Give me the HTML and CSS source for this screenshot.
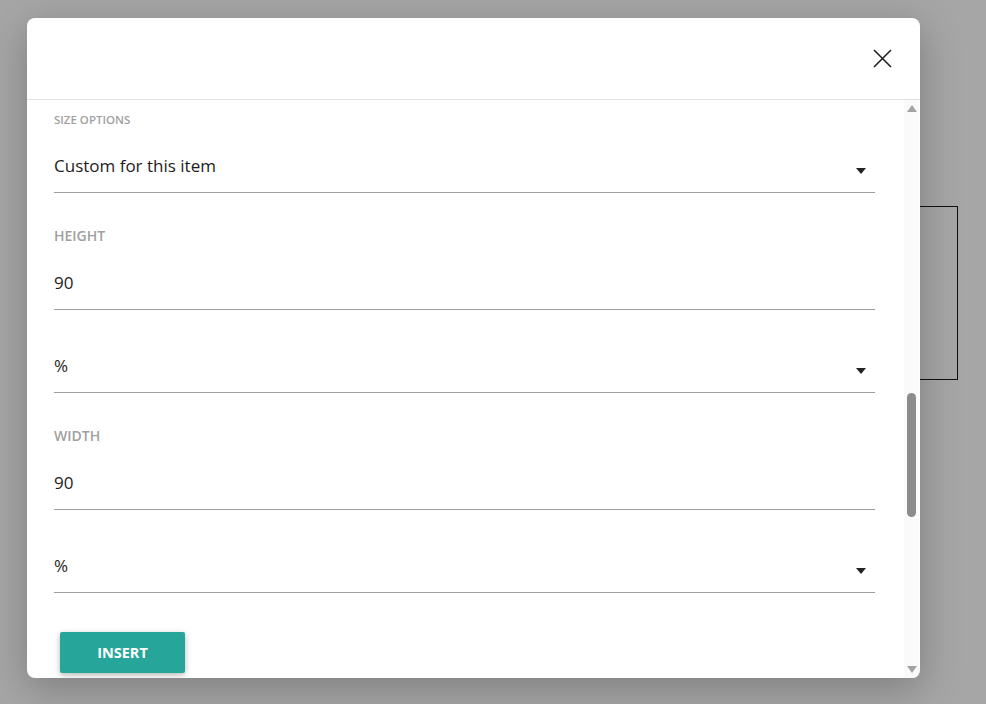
FILE: index.html
```html
<!DOCTYPE html>
<html lang="en">
<head>
    <meta charset="UTF-8">
    <meta name="viewport" content="width=device-width, initial-scale=1.0">
    <title>Insert item</title>
    <link rel="stylesheet" href="styles.css">
</head>
<body>

<div class="page">
    <div class="frame"></div>
</div>

<div class="modal">
    <div class="modal-header">
        <button class="close-button" title="Close">
            <svg width="19" height="19" viewBox="0 0 19 19">
                <path d="M1 1 L18 18 M18 1 L1 18" stroke="#1f1f1f" stroke-width="1.6" fill="none"/>
            </svg>
        </button>
    </div>

    <div class="modal-body">
        <div class="form">
            <div class="field">
                <label class="label label-small">Size options</label>
                <div class="select">
                    <span>Custom for this item</span>
                    <span class="caret"></span>
                </div>
            </div>

            <div class="field field-labeled">
                <label class="label">Height</label>
                <div class="input">90</div>
            </div>

            <div class="field field-plain">
                <div class="select">
                    <span>%</span>
                    <span class="caret"></span>
                </div>
            </div>

            <div class="field field-labeled">
                <label class="label">Width</label>
                <div class="input">90</div>
            </div>

            <div class="field field-plain">
                <div class="select">
                    <span>%</span>
                    <span class="caret"></span>
                </div>
            </div>

            <button class="insert-button">Insert</button>
        </div>

        <!-- scrollbar of the form panel -->
        <div class="scrollbar">
            <div class="scroll-arrow"><span class="arrow-up"></span></div>
            <div class="scroll-track">
                <div class="scroll-thumb"></div>
            </div>
            <div class="scroll-arrow"><span class="arrow-down"></span></div>
        </div>
    </div>
</div>

</body>
</html>
```

FILE: styles.css
```css
body {
    margin: 0;
    height: 100vh;
    overflow: hidden;
    background-color: #a6a6a6;
    font-family: "Open Sans", "Noto Sans", sans-serif;
    color: #1c1c1c;
}

/* page behind the dialog */
.page {
    display: flex;
    justify-content: flex-end;
    padding: 206px 28px 0 0;
}
.frame {
    width: 160px;
    height: 172px;
    border: 1px solid #111;
}

/* dialog */
.modal {
    position: absolute;
    left: 27px;
    top: 18px;
    width: 893px;
    height: 660px;
    background-color: white;
    border-radius: 8px;
    box-shadow: 0 10px 40px rgba(0, 0, 0, 0.25);
    display: flex;
    flex-direction: column;
    overflow: hidden;
}
.modal-header {
    height: 81px;
    flex-shrink: 0;
    display: flex;
    align-items: center;
    justify-content: flex-end;
    padding-right: 28px;
    border-bottom: 1px solid #e0e0e0;
}
.close-button {
    background: none;
    border: none;
    padding: 0;
    width: 19px;
    height: 19px;
    cursor: pointer;
    display: block;
}
.close-button svg {
    display: block;
}

.modal-body {
    flex: 1;
    display: flex;
    min-height: 0;
}
.form {
    flex: 1;
    padding: 12px 29px 0 27px;
    overflow: hidden;
}

.field {
    display: flex;
    flex-direction: column;
}
.field-labeled {
    margin-top: 33px;
}
.field-plain {
    margin-top: 31px;
}
.label {
    display: block;
    font-size: 14px;
    line-height: 20px;
    font-weight: 600;
    text-transform: uppercase;
    color: #a0a0a0;
    margin-bottom: 12px;
}
.label-small {
    font-size: 11.5px;
    line-height: 16px;
    margin-bottom: 13px;
}

.select, .input {
    height: 49px;
    padding-bottom: 2px;
    display: flex;
    align-items: center;
    justify-content: space-between;
    border-bottom: 1px solid #9e9e9e;
    font-size: 17px;
}
.caret {
    width: 0;
    height: 0;
    border-left: 5px solid transparent;
    border-right: 5px solid transparent;
    border-top: 6px solid #222;
    margin: 10px 9px 0 0;
}

.insert-button {
    display: block;
    margin: 39px 0 0 6px;
    width: 125px;
    height: 41px;
    border: none;
    border-radius: 2px;
    background-color: #26a69a;
    color: white;
    font-family: "Open Sans", "Noto Sans", sans-serif;
    font-size: 14.5px;
    font-weight: 700;
    text-transform: uppercase;
    box-shadow: 0 2px 5px rgba(0, 0, 0, 0.2), 0 2px 10px rgba(0, 0, 0, 0.1);
    cursor: pointer;
}

/* scrollbar */
.scrollbar {
    width: 15px;
    flex-shrink: 0;
    margin-right: 1px;
    background-color: #fafafa;
    display: flex;
    flex-direction: column;
}
.scroll-arrow {
    height: 17px;
    display: flex;
    align-items: center;
    justify-content: center;
}
.arrow-up, .arrow-down {
    width: 0;
    height: 0;
    border-left: 5px solid transparent;
    border-right: 5px solid transparent;
}
.arrow-up {
    border-bottom: 7px solid #a3a3a3;
}
.arrow-down {
    border-top: 7px solid #a3a3a3;
}
.scroll-track {
    flex: 1;
    display: flex;
    justify-content: center;
}
.scroll-thumb {
    width: 9px;
    height: 124px;
    margin-top: 276px;
    border-radius: 5px;
    background-color: #8c8c8c;
}
```
